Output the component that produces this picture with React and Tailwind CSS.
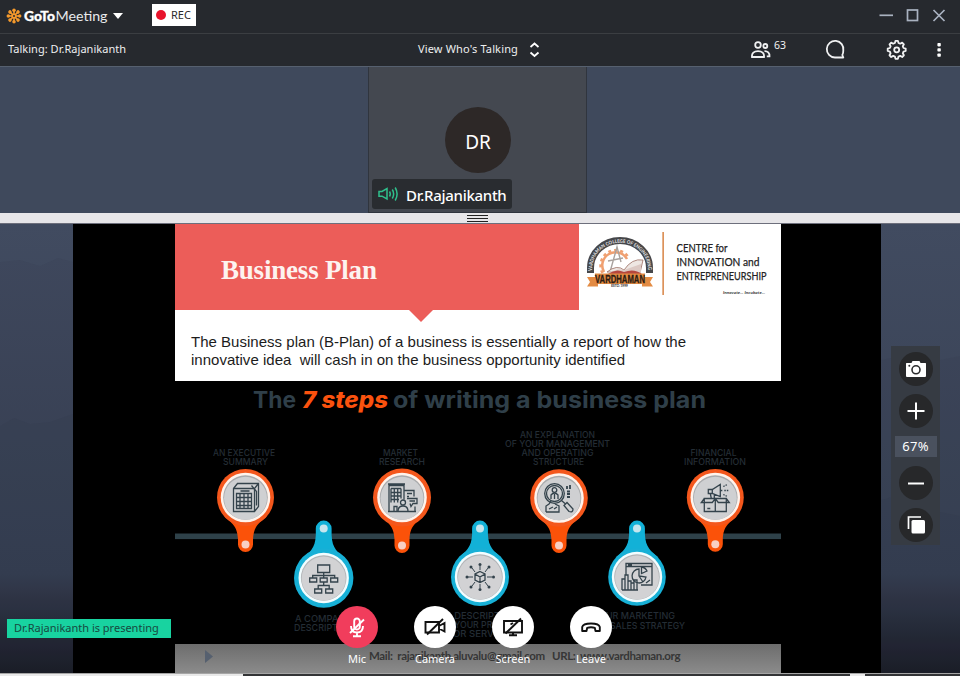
const UI = "font-['Noto_Sans','Open_Sans',sans-serif]";

function Flower() {
  const angles = [0, 45, 90, 135, 180, 225, 270, 315];
  return (
    <svg className="h-[16px] w-[16px] shrink-0" viewBox="-8 -8 16 16">
      {angles.map((a) => (
        <g key={a} transform={`rotate(${a})`}>
          <line x1="0" y1="-1.6" x2="0" y2="-5.6" stroke="#f59a2c" strokeWidth="1.6" />
          <circle cx="0" cy="-5.700" r="1.750" fill="#f59a2c" />
        </g>
      ))}
      <circle r="2.6" fill="#f59a2c" />
      <circle r="1" fill="#26292e" />
    </svg>
  );
}

function TitleBar() {
  return (
    <div className="flex h-[33px] shrink-0 items-start bg-[#26292e]">
      <div className="ml-[6px] mt-[7px] flex items-center">
        <Flower />
        <svg className="ml-[1px] h-[18px] w-[86px]" viewBox="0 0 86 18">
          <text x="1" y="13.500" fontFamily="Lato, sans-serif" fontSize="13.500" fontWeight="900" fill="#fff" stroke="#fff" strokeWidth=".3" textLength="31" lengthAdjust="spacingAndGlyphs">GoTo</text>
          <text x="32.500" y="13.500" fontFamily="Lato, sans-serif" fontSize="13.500" fill="#e8eaec" textLength="52" lengthAdjust="spacingAndGlyphs">Meeting</text>
        </svg>
        <svg className="ml-[4px] h-[6px] w-[10px]" viewBox="0 0 10 6"><path d="M0 0H10L5 6Z" fill="#fff" /></svg>
      </div>
      <div className="ml-[29px] mt-[4px] flex h-[22px] w-[44px] items-center bg-white pl-[4px]">
        <span className="h-[10px] w-[10px] rounded-full bg-[#e8132b]" />
        <span className="ml-[5px] text-[11px] leading-[22px] text-[#2b2b2b]">REC</span>
      </div>
      <svg className="ml-auto mr-[12px] mt-[8px] h-[15px] w-[70px]" viewBox="878 8 70 15" fill="none" stroke="#a9b2c0" strokeWidth="1.700">
        <path d="M879.500 15.300H893" />
        <rect x="907.500" y="10" width="10" height="10.500" />
        <path d="M933.500 10L944.500 21M944.500 10L933.500 21" />
      </svg>
    </div>
  );
}

function ToolBar() {
  return (
    <div className="flex h-[33px] shrink-0 items-center border-t border-[#3b3e42] bg-[#26292e] text-[#eeeff0]">
      <span className="mb-[2px] ml-[8px] w-[410px] text-[11px] leading-[16px] tracking-[0.03px]">Talking: Dr.Rajanikanth</span>
      <span className="mb-[2px] w-[101px] whitespace-nowrap text-[11px] leading-[16px] tracking-[0.15px]">View Who's Talking</span>
      <svg className="ml-[10px] h-[16px] w-[11px]" viewBox="0 0 11 16" fill="none" stroke="#fff" strokeWidth="1.8">
        <path d="M1.500 5L5.500 1.500L9.500 5M1.500 10.500L5.500 14L9.500 10.500" />
      </svg>
      <svg className="mb-[2px] ml-auto mr-[12px] h-[24px] w-[198px]" viewBox="750 37 198 24" fill="none" stroke="#f0f1f2" strokeWidth="1.8">
        <circle cx="758" cy="45" r="2.800" />
        <circle cx="765.300" cy="46" r="2" />
        <path d="M752 57C751.500 53.300 754 51.100 758 51.100S764.500 53.300 764 57Z" />
        <path d="M764.500 51.200C767.500 51 769.800 53 769.500 56.400H766.800" />
        <text x="774" y="49" fontSize="10.500" fill="#f0f1f2" stroke="none" textLength="12" lengthAdjust="spacingAndGlyphs">63</text>
        <path d="M843.300 57.500H835A8.300 8.300 0 1 1 843.300 50.500Q843.300 53.500 842.300 55Z" strokeLinejoin="round" />
        <path d="M894.900 43.500L895.500 41.300H897.900L898.500 43.500L900.200 44.200L902.200 43.100L903.900 44.800L902.800 46.800L903.500 48.500L905.700 49.100V51.500L903.500 52.100L902.800 53.800L903.900 55.800L902.200 57.500L900.200 56.400L898.500 57.100L897.900 59.300H895.500L894.900 57.100L893.200 56.400L891.200 57.500L889.500 55.800L890.600 53.800L889.900 52.100L887.700 51.500V49.100L889.900 48.500L890.600 46.800L889.500 44.800L891.200 43.100L893.200 44.200Z" strokeLinejoin="round" transform="translate(0 -.5)" />
        <circle cx="896.700" cy="49.800" r="2.500" />
        <g fill="#fff" stroke="none">
          <rect x="937.400" y="43" width="3.400" height="3.400" rx=".8" />
          <rect x="937.400" y="48.200" width="3.400" height="3.400" rx=".8" />
          <rect x="937.400" y="53.400" width="3.400" height="3.400" rx=".8" />
        </g>
      </svg>
    </div>
  );
}

function VideoStrip() {
  return (
    <div className="flex h-[147px] shrink-0 border-t border-[#56606f] bg-[#3f495c] pl-[368px]">
      <div className="flex w-[219px] flex-col border-x border-b border-[#30353e] bg-[#444850]">
        <div className="ml-[76px] mt-[40px] flex h-[66px] w-[66px] shrink-0 items-center justify-center rounded-full bg-[#2d2827]">
          <span className="mt-[3px] text-[19px] leading-[24px] tracking-[-0.2px] text-white">DR</span>
        </div>
        <div className="ml-[3px] mt-[6px] flex h-[30px] w-[140px] items-center rounded-[3px] bg-[#292c30] pl-[6px]">
          <svg className="h-[16px] w-[21px]" viewBox="0 0 21 16" fill="none" stroke="#2fc08c" strokeWidth="1.5">
            <path d="M1 5.500H4L9 2.500V13L4 10.200H1Z" />
            <path d="M11.500 5.500Q13 8 11.500 10.500M14.300 3.500Q17 8 14.300 12.500M17.200 1.500Q21 8 17.200 14.500" />
          </svg>
          <span className="ml-[7px] mt-[2px] text-[15px] font-medium leading-[20px] tracking-[-0.3px] text-white">Dr.Rajanikanth</span>
        </div>
      </div>
    </div>
  );
}

function Divider() {
  return (
    <div className="flex h-[11px] shrink-0 items-start justify-center border-b border-[#6d6f7c] bg-[#e7e6e9] pr-[5px]">
      <div className="mt-[2px] flex w-[21px] flex-col gap-[2px]">
        <span className="h-px bg-[#222]" />
        <span className="h-px bg-[#222]" />
        <span className="h-px bg-[#222]" />
      </div>
    </div>
  );
}

function CollegeLogo() {
  return (
    <svg className="ml-[2px] h-[70px] w-[200px]" viewBox="581 228 200 70">
      <defs>
        <path id="arch" d="M592.300 274V268A27.700 25.300 0 0 1 647.700 268V274" />
      </defs>
      <path d="M590.500 273V268A29.500 27.500 0 0 1 649.500 268V273" fill="none" stroke="#46474a" strokeWidth="7" />
      <text fontFamily="Lato, sans-serif" fontSize="4.800" fontWeight="700" fill="#e6e6e6">
        <textPath href="#arch" startOffset="3" textLength="88" lengthAdjust="spacingAndGlyphs">VARDHAMAN COLLEGE OF ENGINEERING</textPath>
      </text>
      <path d="M604 272A12 12 0 1 1 627 259" fill="none" stroke="#f0a071" strokeWidth="2.500" />
      <path d="M602.500 273A14.300 14.300 0 1 1 629 258" fill="none" stroke="#f0a071" strokeWidth="2.500" strokeDasharray="3 3" />
      <path d="M610 272L617 247L621 262M608 261L623 258" fill="none" stroke="#a9a29e" strokeWidth="1.400" />
      <path d="M607 272Q617 264 624 270Q632 258 643 260L640 273Z" fill="#eee7e3" stroke="#9b6d62" strokeWidth=".8" />
      <path d="M624 270L641 264V274H608Q616 268 624 270" fill="#dcc9c4" />
      <path d="M624 272Q634 268 642 274H608Q616 268 624 272" fill="#b5473e" />
      <path d="M587 277H595V273.500H645V277H653L650 282L653 286.500H642V284H598V286.500H587L590 282Z" fill="#e38b43" />
      <text x="595" y="282.600" fontFamily="Liberation Sans, sans-serif" fontWeight="700" fontSize="10.500" fill="#2d1c12" stroke="#2d1c12" strokeWidth=".3" textLength="50" lengthAdjust="spacingAndGlyphs">VARDHAMAN</text>
      <text x="611" y="287.300" fontFamily="Lato, sans-serif" fontWeight="700" fontSize="3.800" fill="#444" textLength="17">ESTD. 1999</text>
      <rect x="662.300" y="232" width="1.700" height="63" fill="#dc925a" />
      <g fontFamily="Lato, sans-serif" fontSize="12" fill="#222" stroke="#222" strokeWidth=".25">
        <text x="676.500" y="251.800" textLength="51" lengthAdjust="spacingAndGlyphs">CENTRE for</text>
        <text x="676.500" y="265.800" textLength="83" lengthAdjust="spacingAndGlyphs">INNOVATION and</text>
        <text x="676.500" y="279.600" textLength="90" lengthAdjust="spacingAndGlyphs">ENTREPRENEURSHIP</text>
      </g>
      <text x="723" y="294.300" fontFamily="Lato, sans-serif" fontWeight="700" fontStyle="italic" fontSize="4.500" fill="#333" textLength="42">Innovate... Incubate...</text>
    </svg>
  );
}

function UpPin({ x, y, r, tail, children }) {
  return (
    <g transform={`translate(${x} ${y})`}>
      <path d={`M-21.500 18.700C-14 25.500 -8 28 -7.500 42V${tail}A7.500 7.500 0 0 0 7.500 ${tail}V42C8 28 14 25.500 21.500 18.700Z`} fill="#fb5209" />
      <circle r={r} fill="#f4571c" />
      <circle r="24.800" fill="#fff3ec" />
      <circle r="22.300" fill="#a9abad" />
      <circle cy=".8" r="21.500" fill="#cfd0d2" />
      <circle cy={tail} r="4" fill="#f8cfc3" />
      {children}
    </g>
  );
}

function DownPin({ x, y, r, tail, children }) {
  return (
    <g transform={`translate(${x} ${y})`}>
      <path d={`M-21.500 -19.500C-14 -26 -8.500 -29 -7.900 -43V${tail}A7.900 7.900 0 0 1 7.900 ${tail}V-43C8.500 -29 14 -26 21.500 -19.500Z`} fill="#12b1d7" />
      <circle r={r} fill="#17b0d6" />
      <circle r="25.200" fill="#f2fdff" />
      <circle r="22.800" fill="#b3b5b8" />
      <circle cy=".5" r="22" fill="#d2d2d4" />
      <circle cy={tail} r="4" fill="#c6e6ee" />
      {children}
    </g>
  );
}

const ink = { fill: "none", stroke: "#34434c", strokeWidth: 1.3 };

function Infographic() {
  const cap = { fontFamily: "Inter, sans-serif", fontSize: 9.2, fontWeight: 500, fill: "#242d35", lengthAdjust: "spacingAndGlyphs" };
  const captions = [
    ["AN EXECUTIVE", 213, 456.3, 62], ["SUMMARY", 223, 465, 45],
    ["MARKET", 383, 456.3, 35], ["RESEARCH", 379, 465, 46],
    ["AN EXPLANATION", 520, 438, 75], ["OF YOUR MANAGEMENT", 505, 447, 105],
    ["AND OPERATING", 521.5, 456.3, 72], ["STRUCTURE", 533, 465, 51],
    ["FINANCIAL", 690.5, 456.3, 46], ["INFORMATION", 684, 465, 62],
    ["A COMPANY", 295, 622, 57], ["DESCRIPTION", 294, 630.5, 60],
    ["A DESCRIPTION", 445, 619, 72], ["OF YOUR PRODUCT", 440, 628, 84], ["OR SERVICE", 453, 637, 56],
    ["YOUR MARKETING", 593, 619.3, 82], ["& SALES STRATEGY", 602, 628.500, 83],
  ];
  return (
    <svg className="block h-[263px] w-[606px]" viewBox="175 381 606 263">
      <g fontFamily="Inter, sans-serif" fontWeight="700" fontSize="23" fill="#2f3f49">
        <text x="253" y="408" textLength="43" lengthAdjust="spacingAndGlyphs">The</text>
        <text x="302" y="408" fontStyle="italic" fontWeight="800" fill="#fb520e" textLength="86" lengthAdjust="spacingAndGlyphs">7 steps</text>
        <text x="393" y="408" textLength="313" lengthAdjust="spacingAndGlyphs">of writing a business plan</text>
      </g>
      {captions.map(([t, x, y, w]) => (
        <text key={t} x={x} y={y} textLength={w} {...cap}>{t}</text>
      ))}
      <rect x="175" y="533.500" width="606" height="5.600" fill="#2e4149" />

      <UpPin x={245.500} y={497.500} r={28.500} tail={47}>
        <g {...ink}>
          <path d="M-12 -9L-8 -14H13V9L9 14H-12ZM-12 -9H9V14M9 -9L13 -14" />
          <path d="M-9 -4H6V11H-9ZM-9 0H6M-9 4H6M-9 8H6M-5.500 -4V11M-1.500 -4V11M2.500 -4V11" />
          <path d="M-5 -6.500H4M6 -12L11 -6V8" />
        </g>
      </UpPin>
      <UpPin x={402} y={497.500} r={29} tail={48}>
        <g {...ink}>
          <path d="M-13 14V-12H2V2M-14 -13.500H3M-11 -5H-1M-11 -1.500H-1M-11 2H-3M-11 -9V5M-7.700 -9V5M-4.300 -9V5M-1 -9V1M-11 -9H-1" />
          <path d="M2 -7H12V-1M5 -4H10M5 -1H7M5 1H15V6H11L9 9L8 6M7.500 3.500H13M13 9V14M-8 14V9H-5V14M-14 14H14" />
          <circle cx="1" cy="5" r="2.500" />
          <path d="M-4 14Q-4 8.500 1 8.500T6 14" />
        </g>
      </UpPin>
      <UpPin x={559} y={498} r={28.800} tail={47.500}>
        <g {...ink}>
          <circle cx="-4.500" cy="-4.500" r="9.800" />
          <circle cx="-4.500" cy="-4.500" r="8" />
          <circle cx="-4.500" cy="-8" r="2.300" />
          <path d="M-8 1V-3Q-4.500 -7 -1 -3V1M-4.500 -4V1M2.500 2.500L6 5.500M5 7.500L8 4.500L14 11Q14 15 10 13.500ZM-13 14V8L-10 6L-8 3M-13 14H0V8L-4 6M-10 11L-6 9M-5 11L-2 9" />
          <path d="M8 -12V-9M11 -13V-9M8 -6.500H11M8 -4H11M8 -1H11" strokeWidth="1.800" />
        </g>
      </UpPin>
      <UpPin x={715.300} y={497.500} r={28.500} tail={46.800}>
        <g {...ink}>
          <path d="M-11 1H11V14H-11ZM0 1V14M-11 1L-14 5H-3L0 1L3 5H14L11 1M-8 11H-5" />
          <path d="M-7 -8H-3L5 -13V-1L-3 -4H-7ZM-3 -8V-4M-5 -4L-4 1M-1 -3V1M5 -7H7" />
          <path d="M8 -11L12 -13M9 -7H13M8 -3L12 -1" strokeDasharray="1.500 1" />
        </g>
      </UpPin>

      <DownPin x={323.700} y={578} r={29.700} tail={-49.500}>
        <g {...ink}>
          <path d="M-6 -13H6V-5.500H-6ZM0 -5.500V0M-11 0V-2.500H11V0M-14 0H-7V4H-14ZM-3.500 0H3.500V4H-3.500ZM7 0H14V4H7ZM0 4V8M-5.500 11V7.500H5.500V11M-9 11H-2V15H-9ZM2 11H9V15H2Z" />
        </g>
      </DownPin>
      <DownPin x={480} y={577} r={29} tail={-48.500}>
        <g {...ink}>
          <path d="M0 -5.500L5 -3V3L0 5.500L-5 3V-3ZM-5 -3L0 0L5 -3M0 0V5.500" />
          <path d="M0 -7V-11M0 7V11M-7 0H-12M7 0H12M-5 -5L-8 -9M5 -5L8 -9M-5 5L-8 9M5 5L8 9" strokeWidth="1" />
          <g fill="#34434c" stroke="none">
            <circle cy="-12.500" r="1.500" /><circle cy="12.500" r="1.500" /><circle cx="-13" r="1.500" /><circle cx="13.500" r="1.500" />
            <circle cx="-9" cy="-10" r="1.500" /><circle cx="9" cy="-10" r="1.500" /><circle cx="-9" cy="10" r="1.500" /><circle cx="9" cy="10" r="1.500" />
          </g>
        </g>
      </DownPin>
      <DownPin x={637} y={577} r={28.800} tail={-48.500}>
        <g {...ink}>
          <path d="M-11 -2V-13.500H15V8H4M-11 -10.500H15M-9 -12H-5" />
          <path d="M2 -8A7 7 0 1 0 9 0L2 -1ZM4.500 -10V-3.500L10 -6Q8.500 -9.500 4.500 -10M2 -1L6 5M9 6L13 3" />
          <path d="M-15 13V2H-12V13M-12 13V-2H-9V13M-9 13V4H-6V13M-6 13V6H-3V13M-3 13V3H0V13M-15 13H1" />
        </g>
      </DownPin>
    </svg>
  );
}

function Slide() {
  return (
    <div className="flex w-[606px] flex-col">
      <div className="flex h-[157px] shrink-0 flex-col bg-white">
        <div className="flex h-[86px] shrink-0">
          <div className="relative h-[86px] w-[404px] shrink-0 bg-[#ec5d59]">
            <h1 className="ml-[46px] mt-[30px] whitespace-nowrap font-['Liberation_Serif',serif] text-[27px] font-bold leading-[32px] tracking-[-0.2px] text-[#fdf3f0]">Business Plan</h1>
            <svg className="absolute left-[233px] top-[85px] h-[13px] w-[26px]" viewBox="0 0 26 13"><path d="M0 0H26L13 13Z" fill="#ec5d59" /></svg>
          </div>
          <div className="mt-[4px] w-[202px]"><CollegeLogo /></div>
        </div>
        <p className="ml-[16px] mt-[23px] whitespace-pre font-['Liberation_Sans',sans-serif] text-[15px] leading-[18px] tracking-[0.02px] text-[#1c1c1c]">{"The Business plan (B-Plan) of a business is essentially a report of how the\ninnovative idea  will cash in on the business opportunity identified"}</p>
      </div>
      <Infographic />
      <div className="flex h-[29px] items-start bg-gradient-to-b from-[#6d6d6d] to-[#8b8b8b]">
        <svg className="ml-[30px] mt-[6px] h-[13px] w-[8px]" viewBox="0 0 8 13"><path d="M0 0L8 6.500L0 13Z" fill="#56606f" /></svg>
        <span className="ml-[156px] mt-[5px] whitespace-pre font-['Lato',sans-serif] text-[11.500px] font-bold leading-[14px] tracking-[-0.36px] text-[#363636]">{"Mail:  rajanikanth.aluvalu@gmail.com   URL:  www.vardhaman.org"}</span>
      </div>
    </div>
  );
}

function RoundTool({ children, className }) {
  return (
    <div className={`flex h-[34px] w-[34px] shrink-0 items-center justify-center rounded-full bg-[#27282a] ${className}`}>
      <svg className="h-[24px] w-[24px]" viewBox="-12 -12 24 24">{children}</svg>
    </div>
  );
}

function ZoomPanel() {
  return (
    <div className="relative ml-[10px] mt-[122px] flex h-[199px] w-[49px] flex-col items-center bg-[#363b43] pt-[6px]">
      <RoundTool className="">
        <path d="M-9.500 -6H-4.500L-3.500 -8H3.500L4.500 -6H9.500Q10 -6 10 -5V7Q10 8 9 8H-9Q-10 8 -10 7V-5.500Z" fill="#fff" />
        <circle cy=".8" r="4" fill="none" stroke="#2b2c2e" strokeWidth="1.600" />
        <circle cx="-6.700" cy="-3.200" r="1" fill="#2b2c2e" />
      </RoundTool>
      <RoundTool className="mt-[8px]">
        <path d="M-8.500 0H8.500M0 -8.500V8.500" stroke="#fff" strokeWidth="2" />
      </RoundTool>
      <div className="mt-[8px] h-[21px] w-[42px] bg-[#4a515e] text-center text-[13px] leading-[20px] tracking-[0.3px] text-white">67%</div>
      <RoundTool className="mt-[9px]">
        <path d="M-8 .5H8" stroke="#fff" strokeWidth="2" />
      </RoundTool>
      <RoundTool className="mt-[8px]">
        <path d="M-7.500 4V-8H5" fill="none" stroke="#fff" strokeWidth="1.700" />
        <rect x="-4.500" y="-5" width="13.500" height="13.500" rx="1.500" fill="#fff" />
      </RoundTool>
    </div>
  );
}

function CallButton({ label, tone, children }) {
  return (
    <div className="flex w-[78px] flex-col items-center">
      <div className={`flex h-[42px] w-[42px] items-center justify-center rounded-full ${tone}`}>
        <svg className="h-[24px] w-[24px]" viewBox="-12 -12 24 24" fill="none" strokeWidth="1.900">{children}</svg>
      </div>
      <span className="mt-[3px] text-[11px] leading-[16px] text-white">{label}</span>
    </div>
  );
}

function CallControls() {
  return (
    <div className="absolute left-[318px] top-[382px] flex">
      <CallButton label="Mic" tone="bg-[#f13d5c]">
        <g stroke="#fff">
          <rect x="-2.800" y="-8.500" width="5.600" height="11" rx="2.800" />
          <path d="M-6 -1Q-6 5.500 0 5.500T6 -1M0 5.500V9M-4 9.300H4M-7 6L7 -7.500" />
        </g>
      </CallButton>
      <CallButton label="Camera" tone="bg-white">
        <g stroke="#111">
          <path d="M-9.500 -5H4V5.500H-9.500ZM4 -1L9.500 -4V4.500L4 1.500" />
          <path d="M-8 7.500L8 -8" />
        </g>
      </CallButton>
      <CallButton label="Screen" tone="bg-white">
        <g stroke="#111">
          <path d="M-9 -6H9V5.500H-9ZM0 5.500V8M-4 8.300H4" />
          <path d="M-7.500 6.500L8 -8.500" />
          <path d="M-2.500 -2.500L0 -4" />
        </g>
      </CallButton>
      <CallButton label="Leave" tone="bg-white">
        <path d="M-8.800 4V0Q-8 -3.500 0 -3.500T8.800 0V4H4.500L3.800 .8Q0 -.3 -3.800 .8L-4.500 4Z" stroke="#111" strokeLinejoin="round" />
      </CallButton>
    </div>
  );
}

function Stage() {
  return (
    <div className="relative flex h-[449px] shrink-0 bg-gradient-to-b from-[#414b60] via-[#374053] via-78% to-[#1a1d27]">
      <svg className="absolute left-0 top-0 h-[449px] w-[960px]" viewBox="0 224 960 449">
        <g fill="#1d2636" fillOpacity=".06">
          <path d="M0 262L20 260L40 266L58 258L73 262V673H0Z" />
          <path d="M0 426L14 418L30 424L50 422L73 414V673H0Z" />
          <path d="M881 360L905 355L930 362L960 356V673H881Z" />
          <path d="M881 500L910 492L940 512L960 516V673H881Z" />
        </g>
      </svg>
      <div className="relative ml-[73px] flex w-[808px] bg-black pl-[102px]">
        <Slide />
      </div>
      <ZoomPanel />
      <div className="absolute left-[7px] top-[395px] h-[19px] w-[164px] bg-[#18d3a0] pl-[7px] text-[11px] leading-[18px] text-[#17493f]">Dr.Rajanikanth is presenting</div>
      <CallControls />
    </div>
  );
}

export default function App() {
  return (
    <div className={`flex h-[676px] w-[960px] flex-col overflow-hidden bg-[#26292e] ${UI}`}>
      <TitleBar />
      <ToolBar />
      <VideoStrip />
      <Divider />
      <Stage />
      <div className="flex h-[3px] shrink-0 border-t border-[#a5a5a5]">
        <div className="w-[243px] bg-[#e9e9e9]" />
        <div className="w-[607px] bg-[#333436]" />
        <div className="w-[15px] bg-[#e9e9e9]" />
        <div className="flex-1 bg-[#333436]" />
      </div>
    </div>
  );
}
